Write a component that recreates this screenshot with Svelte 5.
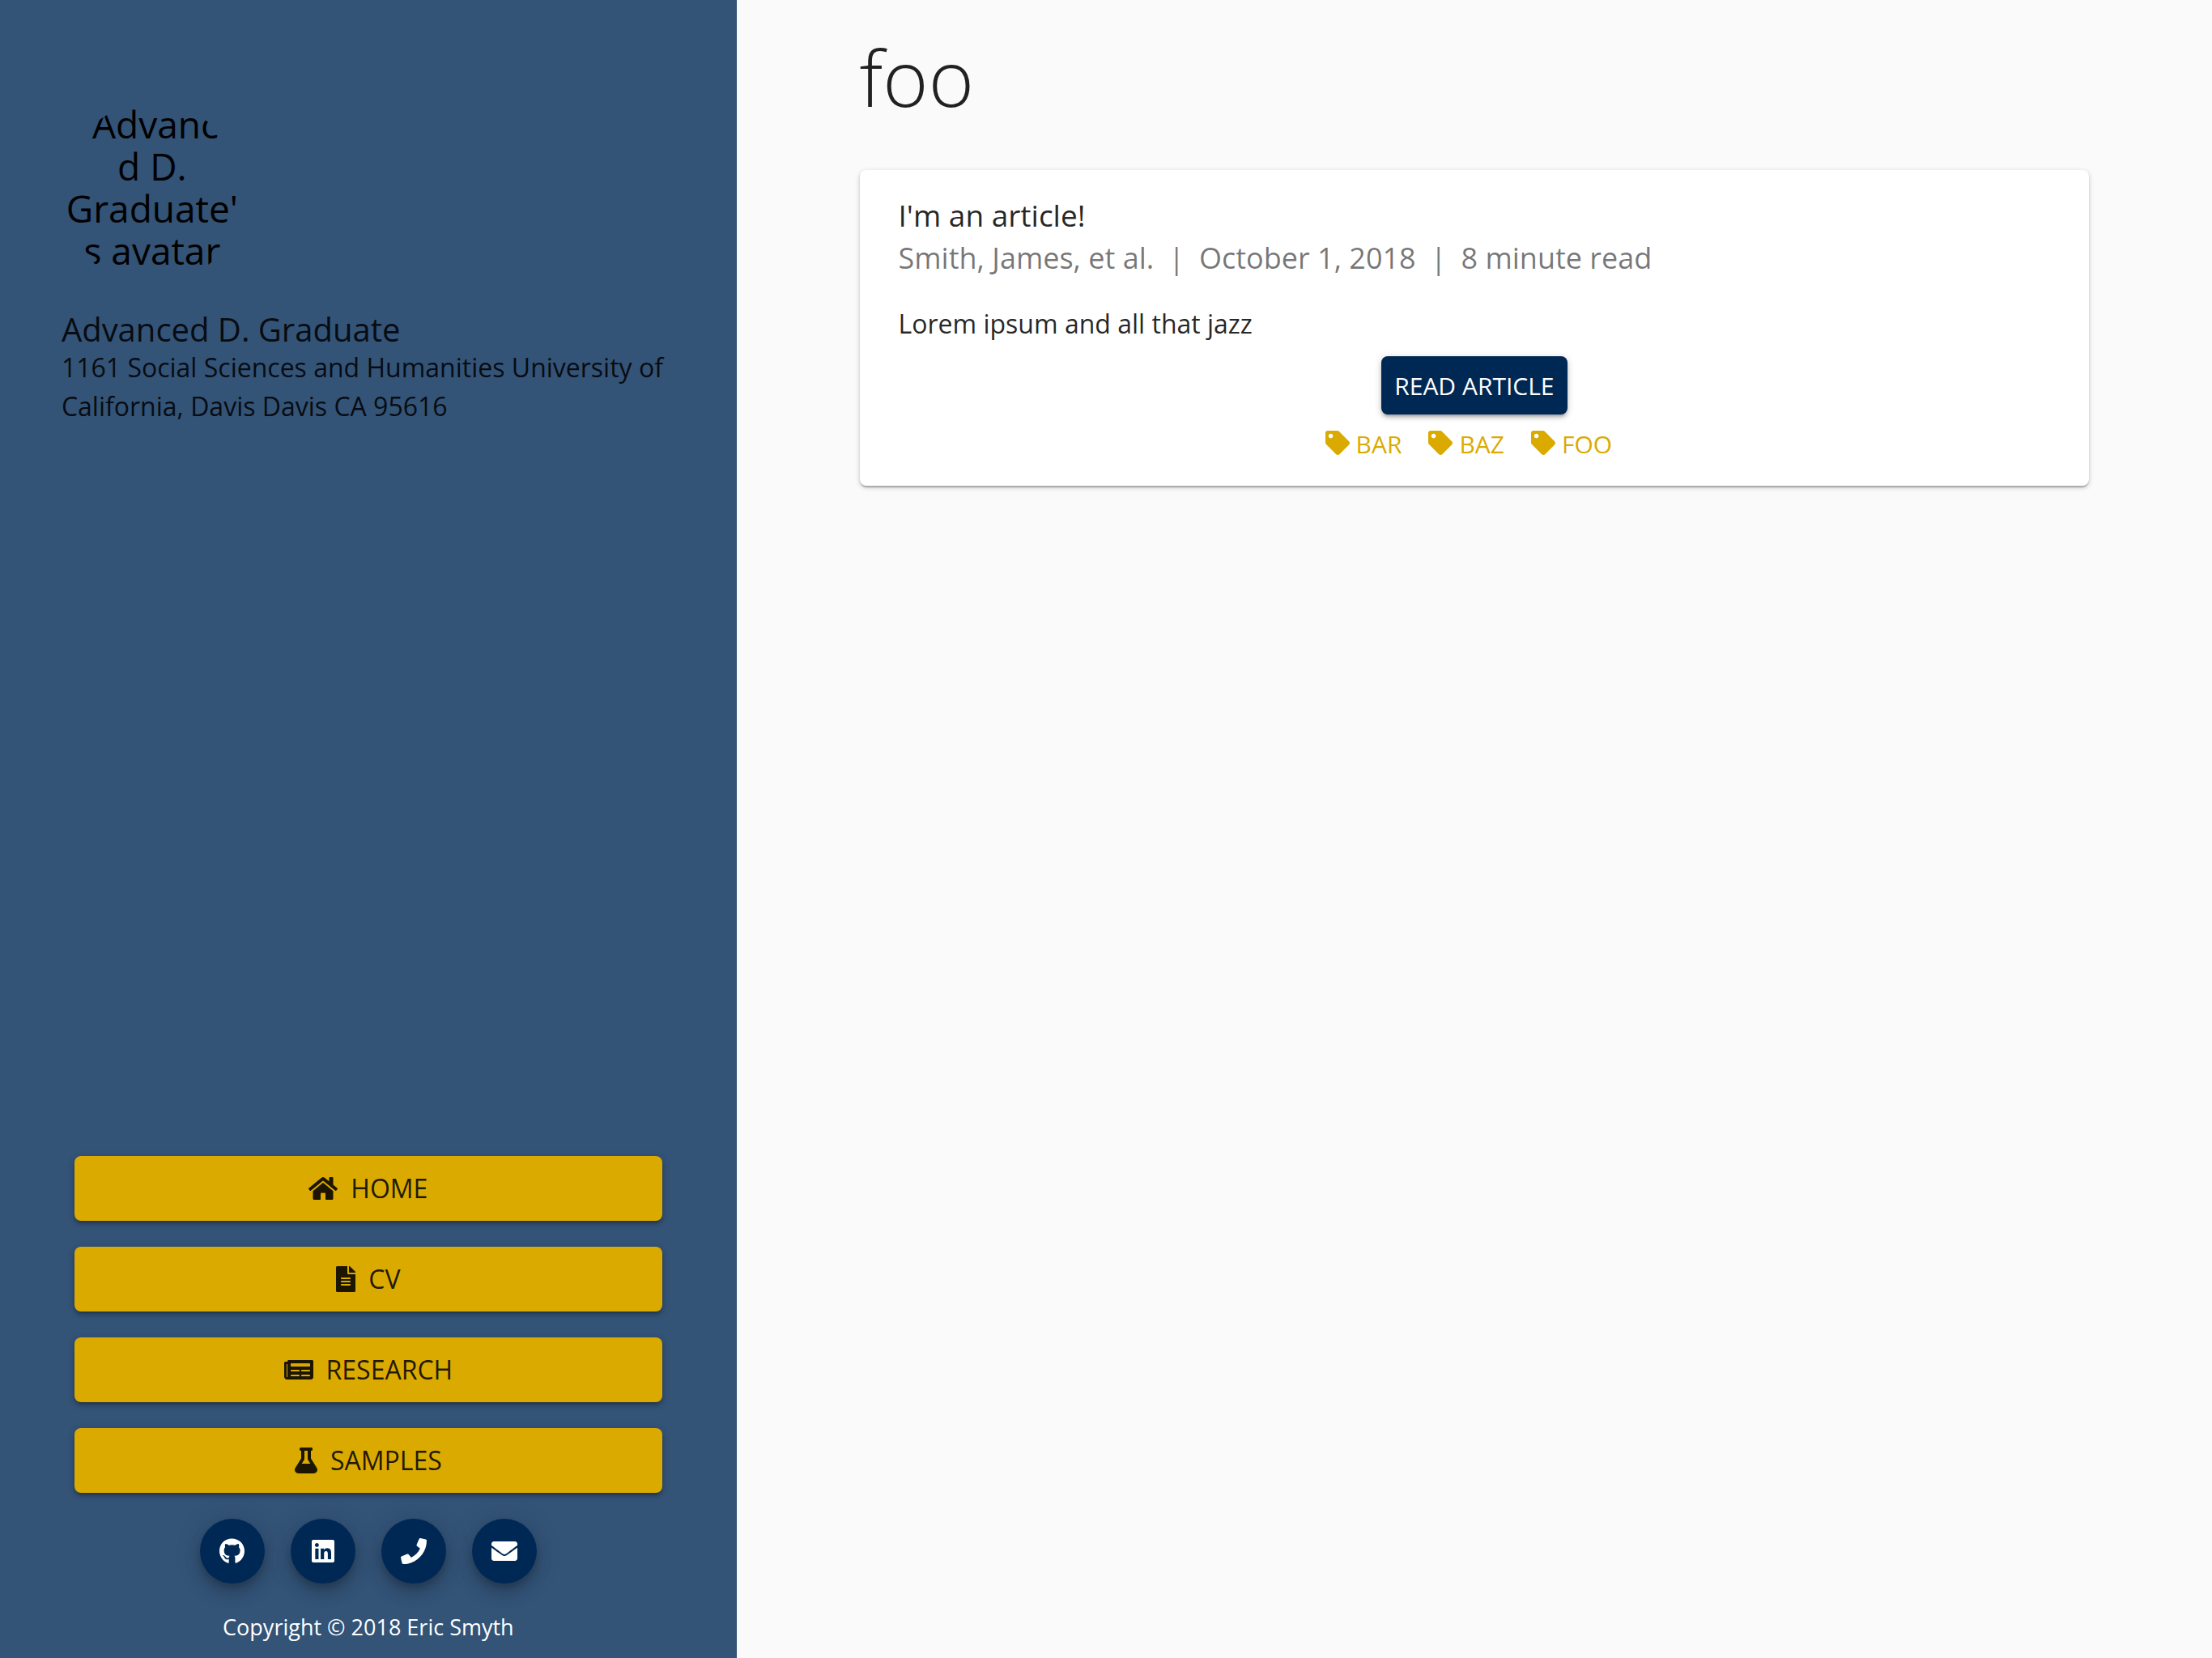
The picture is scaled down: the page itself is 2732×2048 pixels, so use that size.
<script>
  const pages = [
    {
      label: 'Home',
      w: 576,
      d: 'M488 312.7V456c0 13.3-10.7 24-24 24H348c-6.6 0-12-5.4-12-12V356c0-6.6-5.4-12-12-12h-72c-6.6 0-12 5.4-12 12v112c0 6.6-5.4 12-12 12H112c-13.3 0-24-10.7-24-24V312.7c0-3.6 1.6-7 4.4-9.3l188-154.8c4.4-3.6 10.8-3.6 15.3 0l188 154.8c2.7 2.3 4.3 5.7 4.3 9.3zm83.6-60.9L488 182.9V44.4c0-6.6-5.4-12-12-12h-56c-6.6 0-12 5.4-12 12V117l-89.5-73.7c-17.7-14.6-43.3-14.6-61 0L4.4 251.8c-5.1 4.2-5.8 11.8-1.6 16.9l25.5 31c4.2 5.1 11.8 5.8 16.9 1.6l235.2-193.7c4.4-3.6 10.8-3.6 15.3 0l235.2 193.7c5.1 4.2 12.7 3.5 16.9-1.6l25.5-31c4.2-5.2 3.4-12.7-1.7-16.9z',
    },
    {
      label: 'CV',
      w: 384,
      d: 'M224 136V0H24C10.7 0 0 10.7 0 24v464c0 13.3 10.7 24 24 24h336c13.3 0 24-10.7 24-24V160H248c-13.2 0-24-10.8-24-24zm64 236c0 6.6-5.4 12-12 12H108c-6.6 0-12-5.4-12-12v-8c0-6.6 5.4-12 12-12h168c6.6 0 12 5.4 12 12v8zm0-64c0 6.6-5.4 12-12 12H108c-6.6 0-12-5.4-12-12v-8c0-6.6 5.4-12 12-12h168c6.6 0 12 5.4 12 12v8zm0-72v8c0 6.6-5.4 12-12 12H108c-6.6 0-12-5.4-12-12v-8c0-6.6 5.4-12 12-12h168c6.6 0 12 5.4 12 12zm96-114.1v6.1H256V0h6.1c6.4 0 12.5 2.5 17 7l97.9 98c4.5 4.5 7 10.6 7 16.9z',
    },
    {
      label: 'Research',
      w: 576,
      d: 'M552 64H88c-13.3 0-24 10.7-24 24v8H24c-13.3 0-24 10.7-24 24v272c0 30.9 25.1 56 56 56h472c26.5 0 48-21.5 48-48V88c0-13.3-10.7-24-24-24zM56 400a8 8 0 0 1-8-8V144h16v248a8 8 0 0 1-8 8zm236-16H140c-6.6 0-12-5.4-12-12v-8c0-6.6 5.4-12 12-12h152c6.6 0 12 5.4 12 12v8c0 6.6-5.4 12-12 12zm208 0H348c-6.6 0-12-5.4-12-12v-8c0-6.6 5.4-12 12-12h152c6.6 0 12 5.4 12 12v8c0 6.6-5.4 12-12 12zm-208-96H140c-6.6 0-12-5.4-12-12v-8c0-6.6 5.4-12 12-12h152c6.6 0 12 5.4 12 12v8c0 6.6-5.4 12-12 12zm208 0H348c-6.6 0-12-5.4-12-12v-8c0-6.6 5.4-12 12-12h152c6.6 0 12 5.4 12 12v8c0 6.6-5.4 12-12 12zm0-96H140c-6.6 0-12-5.4-12-12v-40c0-6.6 5.4-12 12-12h360c6.6 0 12 5.4 12 12v40c0 6.6-5.4 12-12 12z',
    },
    {
      label: 'Samples',
      w: 448,
      d: 'M437.2 403.5L320 215V64h8c13.3 0 24-10.7 24-24V24c0-13.3-10.7-24-24-24H120c-13.3 0-24 10.7-24 24v16c0 13.3 10.7 24 24 24h8v151L10.8 403.5C-18.5 450.6 15.3 512 70.9 512h306.2c55.7 0 89.4-61.5 60.1-108.5zM137.9 320l48.2-77.6c3.7-5.2 5.8-11.6 5.8-18.4V64h64v160c0 6.9 2.2 13.2 5.8 18.4l48.2 77.6h-172z',
    },
  ];

  const contacts = [
    {
      label: 'GitHub',
      w: 496,
      d: 'M165.9 397.4c0 2-2.3 3.6-5.2 3.6-3.3.3-5.6-1.3-5.6-3.6 0-2 2.3-3.6 5.2-3.6 3-.3 5.6 1.3 5.6 3.6zm-31.1-4.5c-.7 2 1.3 4.3 4.3 4.9 2.6 1 5.6 0 6.2-2s-1.3-4.3-4.3-5.2c-2.6-.7-5.5.3-6.2 2.3zm44.2-1.7c-2.9.7-4.9 2.6-4.6 4.9.3 2 2.9 3.3 5.9 2.6 2.9-.7 4.9-2.6 4.6-4.6-.3-1.9-3-3.2-5.9-2.9zM244.8 8C106.1 8 0 113.3 0 252c0 110.9 69.8 205.8 169.5 239.2 12.8 2.3 17.3-5.6 17.3-12.1 0-6.2-.3-40.4-.3-61.4 0 0-70 15-84.7-29.8 0 0-11.4-29.1-27.8-36.6 0 0-22.9-15.7 1.6-15.4 0 0 24.9 2 38.6 25.8 21.9 38.6 58.6 27.5 72.9 20.9 2.3-16 8.8-27.1 16-33.7-55.9-6.2-112.3-14.3-112.3-110.5 0-27.5 7.6-41.3 23.6-58.9-2.6-6.5-11.1-33.3 2.6-67.9 20.9-6.5 69 27 69 27 20-5.6 41.5-8.5 62.8-8.5s42.8 2.9 62.8 8.5c0 0 48.1-33.6 69-27 13.7 34.7 5.2 61.4 2.6 67.9 16 17.7 25.8 31.5 25.8 58.9 0 96.5-58.9 104.2-114.8 110.5 9.2 7.9 17 22.9 17 46.4 0 33.7-.3 75.4-.3 83.6 0 6.5 4.6 14.4 17.3 12.1C428.2 457.8 496 362.9 496 252 496 113.3 383.5 8 244.8 8z',
    },
    {
      label: 'LinkedIn',
      w: 448,
      d: 'M416 32H31.9C14.3 32 0 46.5 0 64.3v383.4C0 465.5 14.3 480 31.9 480H416c17.6 0 32-14.5 32-32.3V64.3c0-17.8-14.4-32.3-32-32.3zM135.4 416H69V202.2h66.5V416zm-33.2-243c-21.3 0-38.5-17.3-38.5-38.5S80.9 96 102.2 96c21.2 0 38.5 17.3 38.5 38.5 0 21.3-17.2 38.5-38.5 38.5zm282.1 243h-66.4V312c0-24.8-.5-56.7-34.5-56.7-34.6 0-39.9 27-39.9 54.9V416h-66.4V202.2h63.7v29.2h.9c8.9-16.8 30.6-34.5 62.9-34.5 67.2 0 79.7 44.3 79.7 101.9V416z',
    },
    {
      label: 'Phone',
      w: 512,
      d: 'M493.4 24.6l-104-24c-11.3-2.6-22.9 3.3-27.5 13.9l-48 112c-4.2 9.8-1.4 21.3 6.9 28l60.6 49.6c-36 76.7-98.9 140.5-177.2 177.2l-49.6-60.6c-6.8-8.3-18.2-11.1-28-6.9l-112 48C3.9 366.5-2 378.1.6 389.4l24 104C27.1 504.2 36.7 512 48 512c256.1 0 464-207.5 464-464 0-11.2-7.7-20.9-18.6-23.4z',
    },
    {
      label: 'Email',
      w: 512,
      d: 'M502.3 190.8c3.9-3.1 9.7-.2 9.7 4.7V400c0 26.5-21.5 48-48 48H48c-26.5 0-48-21.5-48-48V195.6c0-5 5.7-7.8 9.7-4.7 22.4 17.4 52.1 39.5 154.1 113.6 21.1 15.4 56.7 47.8 92.2 47.6 35.7.3 72-32.8 92.3-47.6 102-74.1 131.6-96.3 154-113.7zM256 320c23.2.4 56.6-29.2 73.4-41.4 132.7-96.3 142.8-104.7 173.4-128.7 5.8-4.5 9.2-11.5 9.2-18.9v-19c0-26.5-21.5-48-48-48H48c-26.5 0-48 21.5-48 48v19c0 7.4 3.4 14.3 9.2 18.9 30.6 23.9 40.7 32.4 173.4 128.7 16.8 12.2 50.2 41.8 73.4 41.4z',
    },
  ];

  const tagPath =
    'M0 252.1V48C0 21.5 21.5 0 48 0h204.1a48 48 0 0 1 33.9 14.1l211.9 211.9c18.7 18.7 18.7 49.1 0 67.9L293.8 497.9c-18.7 18.7-49.1 18.7-67.9 0L14.1 286.1A48 48 0 0 1 0 252.1zM112 64c-26.5 0-48 21.5-48 48s21.5 48 48 48 48-21.5 48-48-21.5-48-48-48z';
  const tags = ['Bar', 'Baz', 'Foo'];
</script>

<div class="page">
  <aside>
    <div class="avatar">Advanced D. Graduate's avatar</div>
    <h2>Advanced D. Graduate</h2>
    <address>1161 Social Sciences and Humanities University of California, Davis Davis CA 95616</address>

    <div class="bottom">
      <nav>
        {#each pages as item}
          <a class="nav-button" href="#{item.label.toLowerCase()}">
            <svg class="icon" viewBox="0 0 {item.w} 512" aria-hidden="true"><path d={item.d} /></svg>
            <span>{item.label}</span>
          </a>
        {/each}
      </nav>
      <div class="contacts">
        {#each contacts as item}
          <a class="round" href="#{item.label.toLowerCase()}" aria-label={item.label}>
            <svg class="icon" viewBox="0 0 {item.w} 512" aria-hidden="true"><path d={item.d} /></svg>
          </a>
        {/each}
      </div>
      <p class="copyright">Copyright © 2018 Eric Smyth</p>
    </div>
  </aside>

  <main>
    <h1>foo</h1>
    <article>
      <h3>I'm an article!</h3>
      <p class="meta">Smith, James, et al.<span class="bar">|</span>October 1, 2018<span class="bar">|</span>8 minute read</p>
      <p class="excerpt">Lorem ipsum and all that jazz</p>
      <a class="read" href="#article">Read article</a>
      <div class="tags">
        {#each tags as name}
          <a href="#{name.toLowerCase()}">
            <svg class="tag-icon" viewBox="0 0 512 512" aria-hidden="true"><path d={tagPath} /></svg>
            <span>{name}</span>
          </a>
        {/each}
      </div>
    </article>
  </main>
</div>

<style>
  :global(body) {
    margin: 0;
    background: #fafafa;
    font-family: 'Open Sans', sans-serif;
    color: rgba(0, 0, 0, 0.87);
  }
  .page {
    display: grid;
    grid-template-columns: 33.3% 1fr;
    min-height: 100vh;
  }
  h1, h2, h3, p, address {
    margin: 0;
    font-weight: 400;
    font-style: normal;
  }
  a {
    color: inherit;
    text-decoration: none;
    text-transform: uppercase;
  }
  svg {
    display: block;
    fill: currentColor;
  }
  .icon {
    height: 32px;
  }
  aside {
    box-sizing: border-box;
    display: flex;
    flex-direction: column;
    padding: 127px calc(100vw / 36) 18px;
    background: #335377;
  }
  /* The circle clips the corners of the fallback text. */
  .avatar {
    width: 224px;
    height: 224px;
    border-radius: 50%;
    overflow: hidden;
    overflow-wrap: anywhere;
    text-align: center;
    text-indent: 34px;
    color: #000;
    font-size: 46px;
    line-height: 52px;
  }
  h2 {
    margin-top: 33px;
    font-size: 40px;
    line-height: 46px;
  }
  address {
    font-size: 32px;
    line-height: 48px;
  }
  .bottom {
    margin-top: auto;
  }
  nav {
    display: grid;
    gap: 32px;
    padding: 0 16px;
  }
  .nav-button {
    display: flex;
    align-items: center;
    justify-content: center;
    gap: 16px;
    height: 80px;
    border-radius: 8px;
    background: #daaa00;
    box-shadow: 0 2px 10px rgba(0, 0, 0, 0.2), 0 4px 4px rgba(0, 0, 0, 0.14), 0 6px 2px -4px rgba(0, 0, 0, 0.12);
    font-size: 32px;
    line-height: 40px;
  }
  .contacts {
    display: flex;
    justify-content: center;
    gap: 32px;
    margin-top: 32px;
  }
  .round {
    display: grid;
    place-items: center;
    width: 80px;
    height: 80px;
    border-radius: 50%;
    background: #002855;
    color: #fff;
    box-shadow: 0 6px 10px -2px rgba(0, 0, 0, 0.2), 0 12px 20px rgba(0, 0, 0, 0.14), 0 2px 36px rgba(0, 0, 0, 0.12);
  }
  .copyright {
    margin-top: 34px;
    text-align: center;
    color: #fff;
    font-size: 27px;
    line-height: 40px;
  }
  main {
    padding: 39px calc(100% / 12);
    padding: 39px calc(100vw / 18);
  }
  h1 {
    font-size: 96px;
    line-height: 112px;
    font-weight: 300;
  }
  article {
    display: flex;
    flex-direction: column;
    margin-top: 59px;
    padding: 32px 48px 30px;
    border-radius: 8px;
    background: #fff;
    box-shadow: 0 2px 6px rgba(0, 0, 0, 0.2), 0 2px 2px rgba(0, 0, 0, 0.14), 0 4px 2px -2px rgba(0, 0, 0, 0.12);
  }
  h3 {
    font-size: 37px;
    line-height: 48px;
  }
  .meta {
    color: rgba(0, 0, 0, 0.54);
    font-size: 36px;
    line-height: 58px;
  }
  .bar {
    margin: 0 18px;
  }
  .excerpt {
    margin-top: 28px;
    font-size: 32px;
    line-height: 48px;
  }
  .read {
    display: grid;
    place-items: center;
    align-self: center;
    height: 72px;
    margin-top: 16px;
    padding: 0 16px;
    border-radius: 8px;
    background: #002855;
    color: #fff;
    box-shadow: 0 2px 10px rgba(0, 0, 0, 0.2), 0 4px 4px rgba(0, 0, 0, 0.14), 0 6px 2px -4px rgba(0, 0, 0, 0.12);
    font-size: 30px;
  }
  .tags {
    display: flex;
    justify-content: center;
    gap: 33px;
    margin-top: 16px;
    padding-right: 14px;
    color: #daaa00;
    font-size: 30px;
    line-height: 42px;
  }
  .tags a {
    display: flex;
    gap: 8px;
  }
  .tag-icon {
    height: 30px;
    margin-top: 4px;
  }
</style>
